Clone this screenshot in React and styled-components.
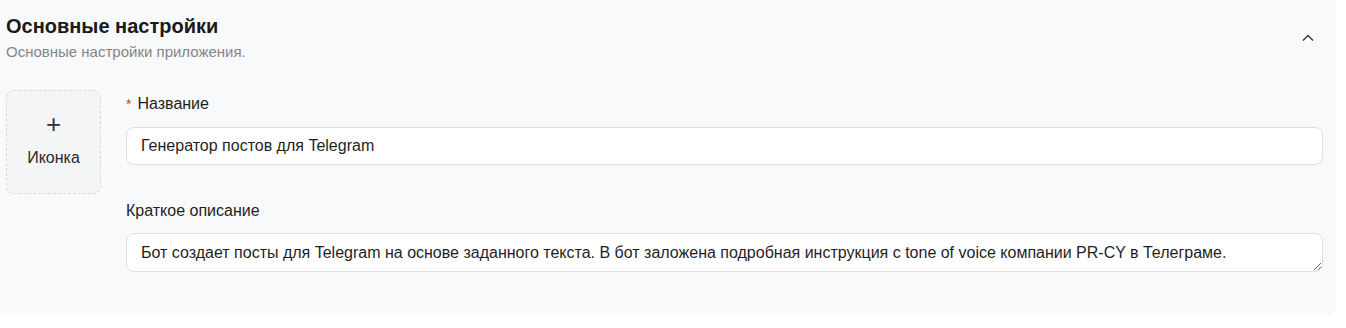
import React from "react";
import styled, { createGlobalStyle } from "styled-components";

function App() {
  return (
    <>
      <GlobalStyle />
      <Panel>
        <Header>
          <HeaderText>
            <Title>Основные настройки</Title>
            <Subtitle>Основные настройки приложения.</Subtitle>
          </HeaderText>
          <Toggle type="button" aria-label="Свернуть">
            <svg width="14" height="14" viewBox="0 0 14 14" fill="none">
              <path d="M2 9.5L7 4.5L12 9.5" stroke="#333" strokeWidth="1.3" />
            </svg>
          </Toggle>
        </Header>
        <Body>
          <IconUpload type="button">
            <Plus>+</Plus>
            <IconLabel>Иконка</IconLabel>
          </IconUpload>
          <Fields>
            <Field>
              <Label>
                <Required>*</Required>Название
              </Label>
              <Input defaultValue="Генератор постов для Telegram" />
            </Field>
            <Field>
              <Label $tight>Краткое описание</Label>
              <TextArea
                rows={1}
                defaultValue="Бот создает посты для Telegram на основе заданного текста. В бот заложена подробная инструкция с tone of voice компании PR-CY в Телеграме."
              />
            </Field>
          </Fields>
        </Body>
      </Panel>
    </>
  );
}

export default App;

//style
const GlobalStyle = createGlobalStyle`
  body {
    margin: 0;
    background: #ffffff;
    font-family: "Liberation Sans", Arial, sans-serif;
    color: #1f1f1f;
  }
`;

const Panel = styled.section`
  width: 1336px;
  height: 315px;
  box-sizing: border-box;
  padding: 12px 13px 0 6px;
  background: #f8f9fb;
  border-bottom-right-radius: 8px;
`;

const Header = styled.div`
  display: flex;
  align-items: center;
  justify-content: space-between;
`;

const HeaderText = styled.div`
  display: flex;
  flex-direction: column;
`;

const Title = styled.h2`
  margin: 0;
  font-size: 20px;
  line-height: 28px;
  font-weight: 700;
  color: #1a1a1a;
`;

const Subtitle = styled.p`
  margin: 0;
  font-size: 15px;
  line-height: 24px;
  color: #858585;
`;

const Toggle = styled.button`
  display: flex;
  align-items: center;
  justify-content: center;
  width: 24px;
  height: 24px;
  margin-right: 3px;
  padding: 0;
  border: none;
  background: transparent;
  cursor: pointer;
`;

const Body = styled.div`
  display: flex;
  gap: 25px;
  margin-top: 26px;
`;

const IconUpload = styled.button`
  display: flex;
  flex-direction: column;
  align-items: center;
  flex-shrink: 0;
  width: 95px;
  height: 104px;
  padding: 19px 0 0;
  box-sizing: border-box;
  border: 1px dashed #d9d9d9;
  border-radius: 8px;
  background: #f4f5f7;
  font-family: inherit;
  cursor: pointer;
`;

const Plus = styled.span`
  font-size: 26px;
  font-weight: 300;
  line-height: 28px;
  color: #333;
`;

const IconLabel = styled.span`
  margin-top: 10px;
  font-size: 16px;
  line-height: 20px;
  color: #2a2a2a;
`;

const Fields = styled.div`
  flex: 1;
  display: flex;
  flex-direction: column;
  gap: 34px;
  padding-top: 2px;
`;

const Field = styled.div`
  display: flex;
  flex-direction: column;
`;

const Label = styled.label`
  display: flex;
  align-items: center;
  height: 24px;
  margin-bottom: ${({ $tight }) => ($tight ? "10px" : "11px")};
  font-size: 16px;
  color: #1f1f1f;
`;

const Required = styled.span`
  margin-right: 6px;
  color: #d4380d;
  font-size: 14px;
`;

const Input = styled.input`
  height: 38px;
  box-sizing: border-box;
  padding: 0 14px;
  border: 1px solid #dedede;
  border-radius: 8px;
  background: #fff;
  font-family: inherit;
  font-size: 16px;
  color: #1f1f1f;
  outline: none;
`;

const TextArea = styled.textarea`
  height: 39px;
  box-sizing: border-box;
  padding: 9px 14px;
  border: 1px solid #dedede;
  border-radius: 8px;
  background: #fff;
  font-family: inherit;
  font-size: 16px;
  line-height: 19px;
  color: #1f1f1f;
  resize: vertical;
  outline: none;
`;
